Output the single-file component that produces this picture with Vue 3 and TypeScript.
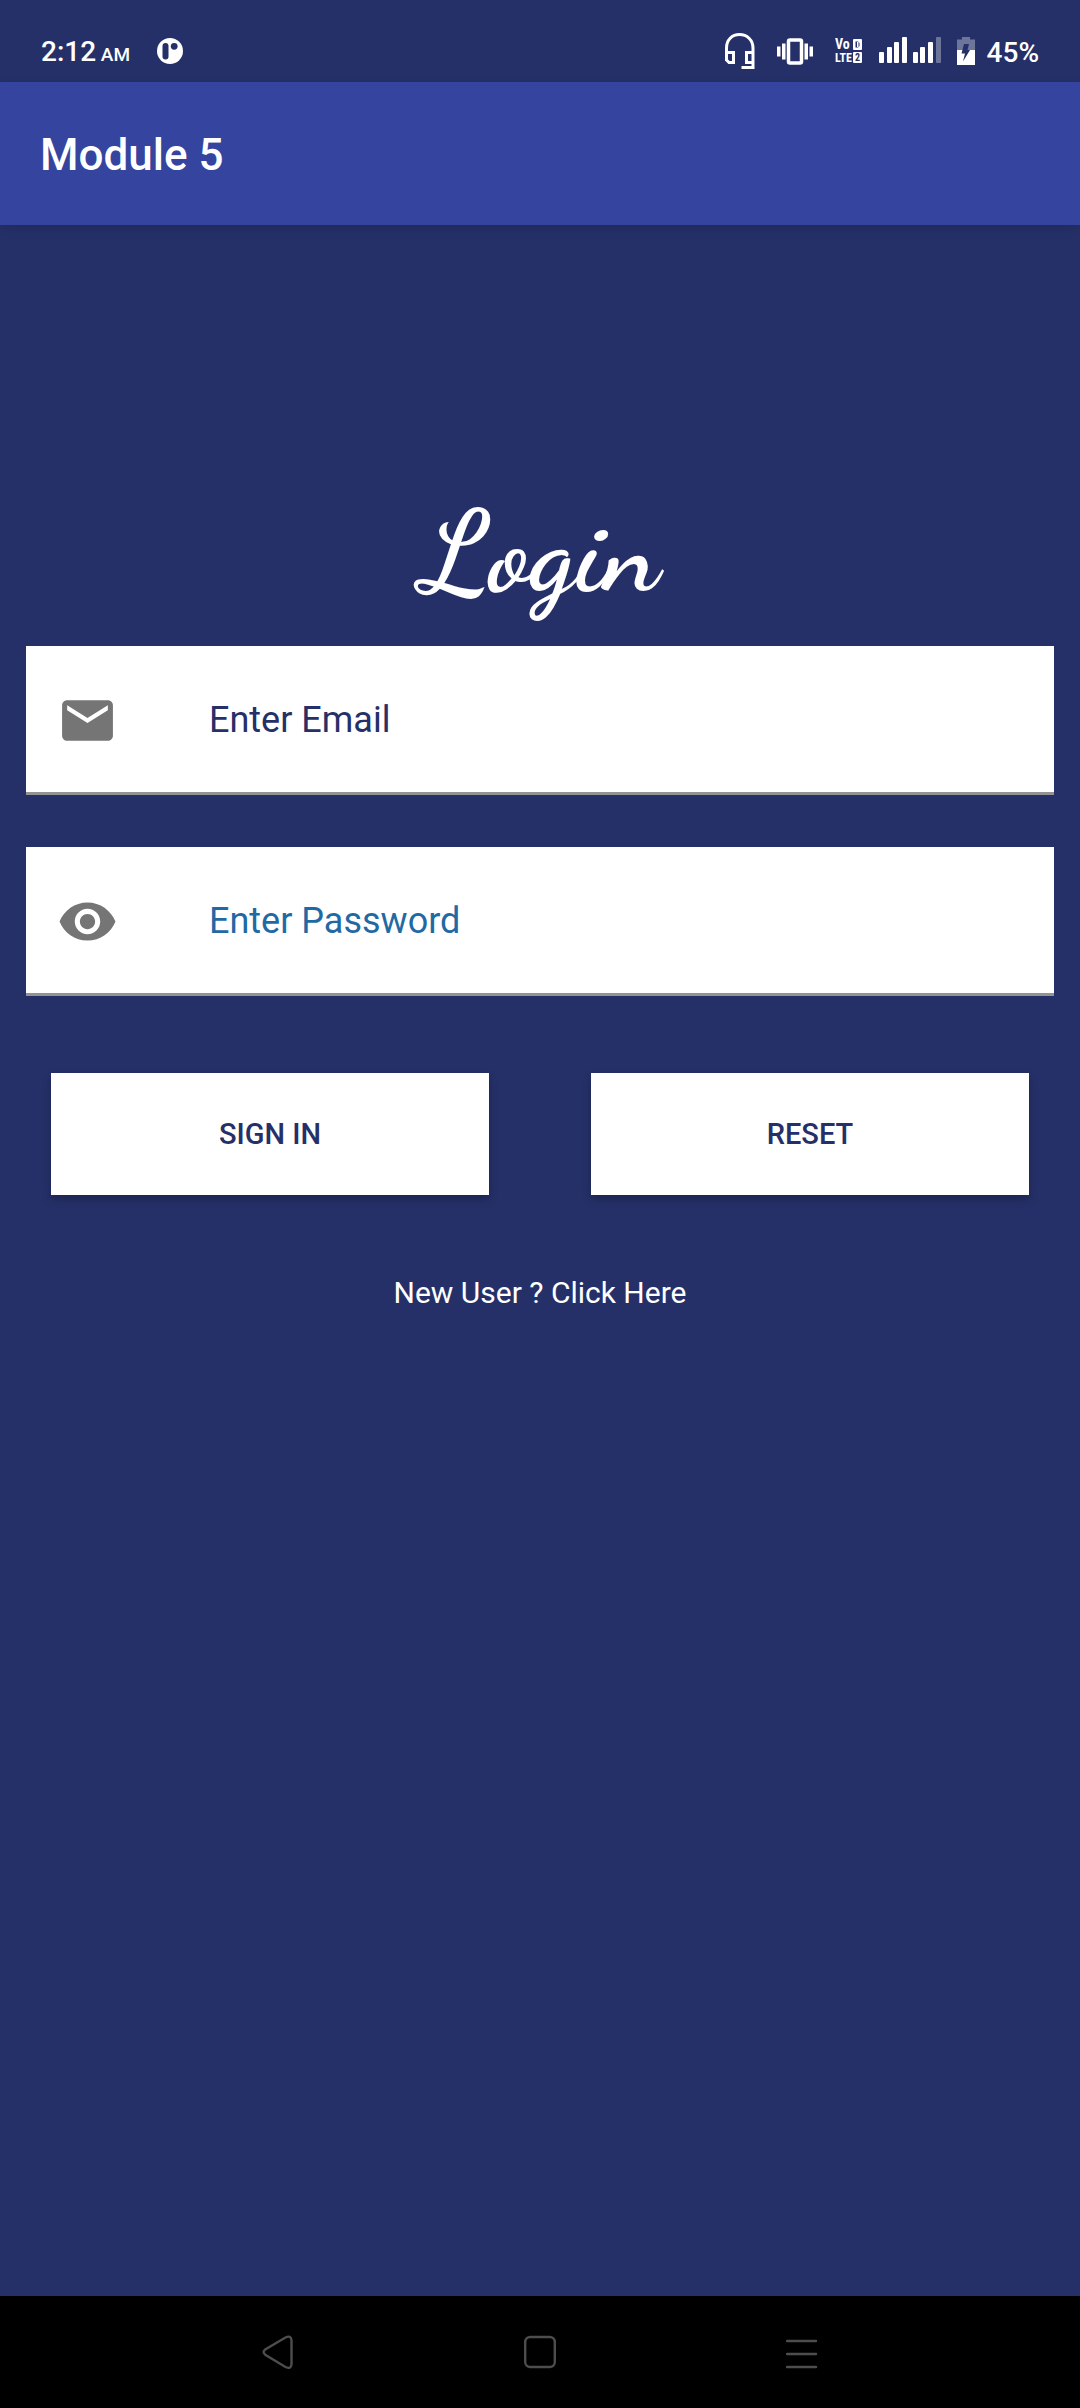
<script setup lang="ts">
import { ref } from 'vue'

interface Bar {
  x: number
  height: number
  faded?: boolean
}

const email = ref('')
const password = ref('')

const bars: Bar[] = [
  { x: 0, height: 11 },
  { x: 8, height: 16 },
  { x: 15, height: 21 },
  { x: 23, height: 26 },
  { x: 34, height: 11 },
  { x: 41, height: 16 },
  { x: 49, height: 21 },
  { x: 57, height: 26, faded: true },
]

function reset(): void {
  email.value = ''
  password.value = ''
}
</script>

<template>
  <div class="screen">
    <div class="status">
      <div class="clock">
        <span class="time">2:12<span class="ampm"> AM</span></span>
        <svg width="26" height="26" viewBox="0 0 26 26" aria-hidden="true">
          <circle cx="13" cy="13" r="13" fill="#fff" />
          <rect x="5.500" y="5" width="6" height="16.500" rx="3" fill="#253068" />
          <circle cx="17.200" cy="8.300" r="3.400" fill="#253068" />
        </svg>
      </div>
      <div class="indicators">
        <div class="modes">
          <svg width="30" height="37" viewBox="0 0 30 37" fill="none" stroke="#fff" stroke-width="3" aria-hidden="true">
            <path d="M1.500 28V15C1.500 7 7 1.500 14.500 1.500S28 7 28 15V34.500H16.500" />
            <path d="M1.500 19.500H8.500V29.500H4L1.500 27Z" />
            <path d="M28 19.500H21.500V29.500H28" />
          </svg>
          <svg width="36" height="27" viewBox="0 0 36 27" fill="#fff" aria-hidden="true">
            <rect x="11.500" y="2" width="13" height="23" rx="1.500" fill="none" stroke="#fff" stroke-width="3.500" />
            <rect x="0" y="8.500" width="3.500" height="10" />
            <rect x="5" y="5.500" width="3.500" height="16" />
            <rect x="27.500" y="5.500" width="3.500" height="16" />
            <rect x="32.500" y="8.500" width="3.500" height="10" />
          </svg>
          <svg class="volte" width="28" height="36" viewBox="0 -6 28 36" fill="#fff" aria-hidden="true">
            <text x="0" y="10" font-size="14">Vo</text>
            <text x="0" y="23" font-size="12">LTE</text>
            <rect x="18" y="0" width="9" height="11" rx="1" />
            <path d="M20.500 2.500H23L24.500 4V7L23 8.500H20.500Z" fill="#253068" />
            <rect x="22" y="3" width="1.500" height="5" fill="#fff" />
            <rect x="18" y="13" width="9" height="11" rx="1" />
            <text x="20" y="22" font-size="10" fill="#253068">2</text>
          </svg>
        </div>
        <svg width="62" height="28" viewBox="0 0 62 28" fill="#fff" aria-hidden="true">
          <rect
            v-for="bar in bars"
            :key="bar.x"
            :x="bar.x"
            :y="26 - bar.height"
            width="5"
            :height="bar.height"
            rx="1"
            :fill-opacity="bar.faded ? 0.33 : 1"
          />
        </svg>
        <div class="battery">
          <svg width="18" height="28" viewBox="0 0 18 28" aria-hidden="true">
            <path d="M0 2.500H5V0H13V2.500H18V13H0Z" fill="#6e759a" />
            <path d="M0 13H18V28H0Z" fill="#fff" />
            <path d="M7 7H12L10.500 13H13L6 24.500L8 16.500H4.500Z" fill="#253068" />
          </svg>
          <span class="time">45%</span>
        </div>
      </div>
    </div>

    <header class="appbar">
      <h1>Module 5</h1>
    </header>

    <main>
      <h2>Login</h2>
      <form @submit.prevent>
        <div class="field">
          <label for="email" aria-label="Email">
            <svg width="61" height="61" viewBox="0 0 24 24" fill="#757575">
              <path d="M20 4H4c-1.100 0-1.990.9-1.990 2L2 18c0 1.100.9 2 2 2h16c1.100 0 2-.9 2-2V6c0-1.100-.9-2-2-2zm0 4l-8 5-8-5V6l8 5 8-5v2z" />
            </svg>
          </label>
          <input id="email" v-model="email" type="email" placeholder="Enter Email" />
        </div>
        <div class="field secret">
          <label for="password" aria-label="Password">
            <svg width="61" height="61" viewBox="0 0 24 24" fill="#757575">
              <path d="M12 4.500C7 4.500 2.730 7.610 1 12c1.730 4.390 6 7.500 11 7.500s9.270-3.110 11-7.500c-1.730-4.390-6-7.500-11-7.500zM12 17c-2.760 0-5-2.240-5-5s2.240-5 5-5 5 2.240 5 5-2.240 5-5 5zm0-8c-1.660 0-3 1.340-3 3s1.340 3 3 3 3-1.340 3-3-1.340-3-3-3z" />
            </svg>
          </label>
          <input id="password" v-model="password" type="password" placeholder="Enter Password" />
        </div>
        <div class="actions">
          <button type="submit">SIGN IN</button>
          <button type="button" @click="reset">RESET</button>
        </div>
      </form>
      <a class="signup" href="#register">New User ? Click Here</a>
    </main>

    <nav>
      <button type="button" aria-label="Back">
        <svg width="32" height="34" viewBox="0 0 32 34">
          <path d="M23.500 2.500L3.200 14.500Q0 17 3.200 19.700L23.500 32Q29 34.500 29.500 29.500V5Q29 0 23.500 2.500Z" />
        </svg>
      </button>
      <button type="button" aria-label="Home">
        <svg width="32" height="34" viewBox="0 0 32 34">
          <rect x="1.200" y="2" width="29.600" height="30" rx="5" />
        </svg>
      </button>
      <button type="button" aria-label="Recent apps">
        <svg width="32" height="34" viewBox="0 0 32 34">
          <path d="M1 6H30M1 19H30M1 32H30" stroke-linecap="round" />
        </svg>
      </button>
    </nav>
  </div>
</template>

<style>
body {
  margin: 0;
  background: #253068;
}
</style>

<style scoped>
.screen {
  display: flex;
  flex-direction: column;
  min-height: 100vh;
  background: #253068;
  color: #fff;
  font-family: Roboto, sans-serif;
}

svg {
  display: block;
  flex: none;
}

.status {
  display: flex;
  justify-content: space-between;
  align-items: center;
  box-sizing: border-box;
  height: 82px;
  padding: 20px 41px 0;
}

.clock,
.indicators,
.modes,
.battery {
  display: flex;
  align-items: center;
}

.clock {
  gap: 27px;
}

.indicators {
  gap: 16px;
}

.modes {
  gap: 22px;
}

.battery {
  gap: 12px;
}

.time {
  padding-top: 4px;
  font-size: 28px;
  font-weight: 500;
  line-height: 32px;
}

.ampm {
  font-size: 19px;
}

.volte {
  font-family: "Roboto Condensed", Roboto, sans-serif;
  font-weight: 700;
}

.appbar {
  display: flex;
  align-items: center;
  box-sizing: border-box;
  height: 143px;
  padding: 2px 40px 0;
  background: #35449e;
  box-shadow: 0 3px 10px rgba(0, 0, 0, 0.14);
}

h1 {
  margin: 0;
  font-size: 44px;
  font-weight: 500;
  line-height: 52px;
}

main {
  display: flex;
  flex: 1;
  flex-direction: column;
  padding: 268px 26px 40px;
}

h2 {
  margin: 0 0 33px;
  font-family: "Dancing Script", "Liberation Serif", cursive;
  font-size: 114px;
  font-weight: 700;
  line-height: 120px;
  text-align: center;
}

form {
  display: flex;
  flex-direction: column;
  gap: 52px;
}

.field {
  display: flex;
  align-items: center;
  gap: 91px;
  height: 149px;
  padding-left: 31px;
  background: #fff;
  box-shadow: inset 0 -3px #929392;
}

input {
  flex: 1;
  min-width: 0;
  padding: 0 24px 2px 0;
  border: 0;
  outline: 0;
  background: none;
  color: #253068;
  font: 36px/44px Roboto, sans-serif;
}

input::placeholder {
  color: #253068;
  opacity: 1;
}

.secret input::placeholder {
  color: #1f6aa5;
}

.actions {
  display: flex;
  gap: 102px;
  padding: 25px 25px 0;
}

.actions button {
  flex: 1;
  height: 122px;
  padding: 0;
  border: 0;
  background: #fff;
  box-shadow: 0 4px 8px rgba(0, 0, 0, 0.25);
  color: #253068;
  font: 500 29px/36px Roboto, sans-serif;
}

.signup {
  align-self: center;
  margin-top: 80px;
  color: #fff;
  font-size: 30px;
  line-height: 36px;
  text-decoration: none;
}

nav {
  display: flex;
  justify-content: center;
  align-items: center;
  gap: 230px;
  height: 112px;
  background: #000;
}

nav button {
  padding: 0;
  border: 0;
  background: none;
}

nav svg {
  fill: none;
  stroke: #4d4d4d;
  stroke-width: 2.400;
}
</style>
